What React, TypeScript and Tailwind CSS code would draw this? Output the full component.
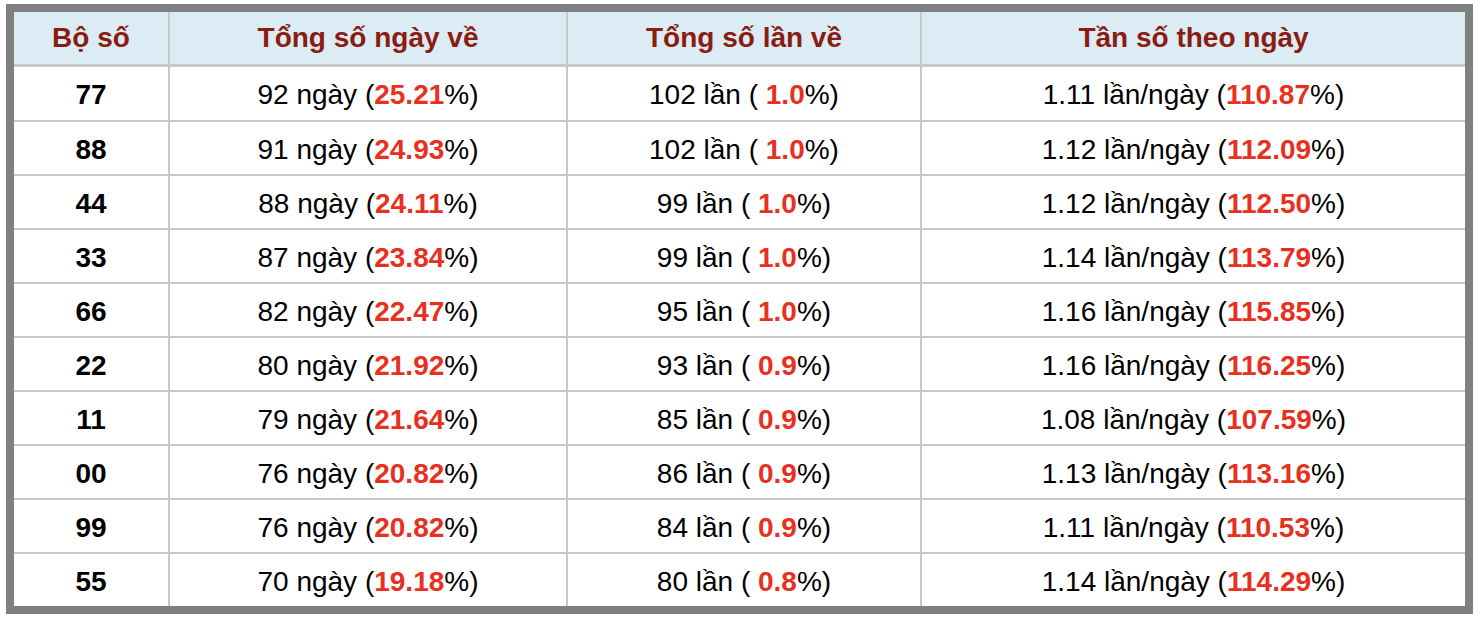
import React from "react";

type Row = {
  so: string;
  ngay: string;
  ngayPct: string;
  lan: string;
  lanPct: string;
  tanSo: string;
  tanSoPct: string;
};

const rows: Row[] = [
  { so: "77", ngay: "92", ngayPct: "25.21", lan: "102", lanPct: "1.0", tanSo: "1.11", tanSoPct: "110.87" },
  { so: "88", ngay: "91", ngayPct: "24.93", lan: "102", lanPct: "1.0", tanSo: "1.12", tanSoPct: "112.09" },
  { so: "44", ngay: "88", ngayPct: "24.11", lan: "99", lanPct: "1.0", tanSo: "1.12", tanSoPct: "112.50" },
  { so: "33", ngay: "87", ngayPct: "23.84", lan: "99", lanPct: "1.0", tanSo: "1.14", tanSoPct: "113.79" },
  { so: "66", ngay: "82", ngayPct: "22.47", lan: "95", lanPct: "1.0", tanSo: "1.16", tanSoPct: "115.85" },
  { so: "22", ngay: "80", ngayPct: "21.92", lan: "93", lanPct: "0.9", tanSo: "1.16", tanSoPct: "116.25" },
  { so: "11", ngay: "79", ngayPct: "21.64", lan: "85", lanPct: "0.9", tanSo: "1.08", tanSoPct: "107.59" },
  { so: "00", ngay: "76", ngayPct: "20.82", lan: "86", lanPct: "0.9", tanSo: "1.13", tanSoPct: "113.16" },
  { so: "99", ngay: "76", ngayPct: "20.82", lan: "84", lanPct: "0.9", tanSo: "1.11", tanSoPct: "110.53" },
  { so: "55", ngay: "70", ngayPct: "19.18", lan: "80", lanPct: "0.8", tanSo: "1.14", tanSoPct: "114.29" },
];

const cols = "grid grid-cols-[154px_398px_354px_1fr]";
const cell = "flex items-center justify-center";
const sep = "border-l-2 border-[#c8c8c8]";

function Red({ children }: { children: React.ReactNode }) {
  return <b className="font-bold text-[#e8301f]">{children}</b>;
}

export default function App() {
  return (
    <div className="bg-white w-[1480px] h-[620px] pl-[6px] pt-[4px] font-['Liberation_Sans',Arial,sans-serif]">
      <div className="w-[1467px] border-8 border-[#808080]">
        {/* Header */}
        <div className={`${cols} h-[55px] bg-[#dcecf5] border-b-[3px] border-[#c8c8c8] text-[28px] font-bold text-[#8b1c12]`}>
          <div className={cell}>Bộ số</div>
          <div className={`${cell} ${sep}`}>Tổng số ngày về</div>
          <div className={`${cell} ${sep}`}>Tổng số lần về</div>
          <div className={`${cell} ${sep}`}>Tần số theo ngày</div>
        </div>

        {/* Rows */}
        {rows.map((r, i) => (
          <div
            key={r.so}
            className={`${cols} text-[28px] text-black ${
              i === 0 ? "h-[53px]" : "h-[54px] border-t-2 border-[#c8c8c8]"
            }`}
          >
            <div className={`${cell} pt-[3px] font-bold`}>{r.so}</div>
            <div className={`${cell} pt-[3px] ${sep}`}>
              <span>
                {r.ngay} ngày (<Red>{r.ngayPct}</Red>%)
              </span>
            </div>
            <div className={`${cell} pt-[3px] ${sep}`}>
              <span>
                {r.lan} lần ( <Red>{r.lanPct}</Red>%)
              </span>
            </div>
            <div className={`${cell} pt-[3px] ${sep}`}>
              <span>
                {r.tanSo} lần/ngày (<Red>{r.tanSoPct}</Red>%)
              </span>
            </div>
          </div>
        ))}
      </div>
    </div>
  );
}
